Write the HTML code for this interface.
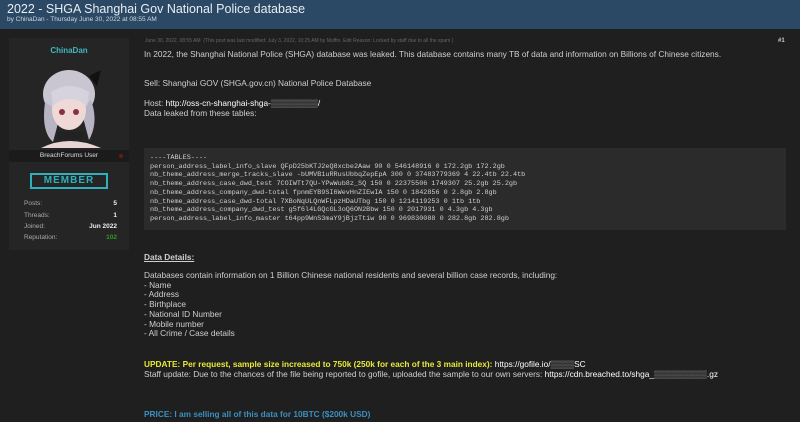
<!DOCTYPE html>
<html><head><style>
*{margin:0;padding:0;box-sizing:border-box}
body{width:800px;height:422px;overflow:hidden;background:#1f1f20;font-family:"Liberation Sans",sans-serif;color:#cfcfcf;position:relative}
.hd{position:absolute;left:0;top:0;width:800px;height:29px;background:#2b4864}
.t{position:absolute;left:7px;top:2px;font-size:12.5px;color:#e8eef4}
.s{position:absolute;left:7px;top:16px;font-size:6.5px;color:#d0d8e0}
.side{position:absolute;left:9px;top:38px;width:120px;height:212px;background:#252526}
.a{position:absolute;font-size:8.3px;color:#cfcfcf;white-space:nowrap}
.code{position:absolute;left:144px;top:148px;width:642px;height:82px;background:#2b2b2c;font-family:"Liberation Mono",monospace;font-size:6.8px;color:#cfcfcf;line-height:8.7px;padding:6px 0 0 6px;white-space:pre}
.st{position:absolute;font-size:6.5px;color:#aaa}
.sv{position:absolute;right:12px;font-size:6.5px;color:#eee;font-weight:bold}
</style></head><body>
<div class="hd"><div class="t">2022 - SHGA Shanghai Gov National Police database</div><div class="s">by ChinaDan - Thursday June 30, 2022 at 08:55 AM</div></div>
<div class="side">
<div style="position:absolute;top:8px;width:100%;text-align:center;font-size:8px;font-weight:bold;color:#3fb8c0">ChinaDan</div>
<svg style="position:absolute;left:22px;top:24px" width="78" height="86" viewBox="0 0 78 86"><ellipse cx="38" cy="32" rx="26" ry="24" fill="#c9c6d2"/><path d="M14 40 Q10 70 22 80 L30 50Z M60 38 Q68 60 58 78 L50 48Z" fill="#b8b4c4"/><ellipse cx="38" cy="48" rx="17" ry="20" fill="#efd9d6"/><path d="M20 30 Q38 18 58 30 L56 44 Q38 30 22 44Z" fill="#d6d3de"/><circle cx="31" cy="50" r="3" fill="#8a3040"/><circle cx="45" cy="50" r="3" fill="#8a3040"/><rect x="26" y="70" width="26" height="7" fill="#222"/><path d="M10 86 Q38 72 70 86Z" fill="#e9d6d4"/><path d="M58 14 L70 8 L66 24Z" fill="#111"/></svg>
<div style="position:absolute;top:112px;left:0;width:120px;height:12px;background:#1b1b1c;font-size:6.5px;color:#ddd;text-align:center;line-height:12px">BreachForums User</div>
<div style="position:absolute;top:116px;right:6px;width:4px;height:4px;border-radius:50%;background:#6a1a1a"></div>
<div style="position:absolute;top:135px;left:21px;width:78px;height:16px;border:2px solid #2fb0bb;color:#2fb0bb;font-size:10px;font-weight:bold;text-align:center;line-height:12px;letter-spacing:1px">MEMBER</div>
<div class="st" style="left:15px;top:162px">Posts:</div><div class="sv" style="top:162px">5</div>
<div class="st" style="left:15px;top:174px">Threads:</div><div class="sv" style="top:174px">1</div>
<div class="st" style="left:15px;top:185px">Joined:</div><div class="sv" style="top:185px">Jun 2022</div>
<div class="st" style="left:15px;top:196px">Reputation:</div><div class="sv" style="top:196px;color:#2a9a2a">102</div>
</div>
<div class="a" style="left:145px;top:38px;font-size:5px;color:#666">June 30, 2022, 08:55 AM &nbsp;(This post was last modified: July 3, 2022, 10:25 AM by Muffin. Edit Reason: Locked by staff due to all the spam )</div>
<div class="a" style="left:778px;top:38px;font-size:6px;color:#ccc;font-weight:bold">#1</div>
<div class="a" style="left:144px;top:49px">In 2022, the Shanghai National Police (SHGA) database was leaked. This database contains many TB of data and information on Billions of Chinese citizens.</div>
<div class="a" style="left:144px;top:78px">Sell: Shanghai GOV (SHGA.gov.cn) National Police Database</div>
<div class="a" style="left:144px;top:98px">Host: <span style="color:#fff">http://oss-cn-shanghai-shga-<span style="color:#999">▒▒▒▒▒▒▒▒</span>/</span></div>
<div class="a" style="left:144px;top:108px">Data leaked from these tables:</div>
<div class="code">----TABLES----
person_address_label_info_slave QFpD25bKTJ2eQ8xcbe2Aaw 90 0 546148916 0 172.2gb 172.2gb
nb_theme_address_merge_tracks_slave -bUMVB1uRRusUbbqZepEpA 300 0 37483779369 4 22.4tb 22.4tb
nb_theme_address_case_dwd_test 7COIWTt7QU-YPwWub8z_SQ 150 0 22375506 1749307 25.2gb 25.2gb
nb_theme_address_company_dwd-total fpnmEYB9SI6WevHnZIEwIA 150 0 1842856 0 2.8gb 2.8gb
nb_theme_address_case_dwd-total 7XBoNqULQnWFLpzHDaUTbg 150 0 1214119253 0 1tb 1tb
nb_theme_address_company_dwd_test g5f6l4LGQcGL3oQ6ON2Bbw 150 0 2017931 0 4.3gb 4.3gb
person_address_label_info_master t64pp9WnS3maY9jBjzTtiw 90 0 969830088 0 282.8gb 282.8gb</div>
<div class="a" style="left:144px;top:252px;font-weight:bold;text-decoration:underline">Data Details:</div>
<div class="a" style="left:144px;top:271px;line-height:9.7px">Databases contain information on 1 Billion Chinese national residents and several billion case records, including:<br>- Name<br>- Address<br>- Birthplace<br>- National ID Number<br>- Mobile number<br>- All Crime / Case details</div>
<div class="a" style="left:144px;top:359px"><b style="color:#e8e83a">UPDATE: Per request, sample size increased to 750k (250k for each of the 3 main index):</b> <span style="color:#fff">https://gofile.io/<span style="color:#999">▒▒▒▒</span>SC</span></div>
<div class="a" style="left:144px;top:369px">Staff update: Due to the chances of the file being reported to gofile, uploaded the sample to our own servers: <span style="color:#fff">https://cdn.breached.to/shga_<span style="color:#999">▒▒▒▒▒▒▒▒▒</span>.gz</span></div>
<div class="a" style="left:144px;top:409px;font-weight:bold;color:#3a90c0">PRICE: I am selling all of this data for 10BTC ($200k USD)</div>
</body></html>
